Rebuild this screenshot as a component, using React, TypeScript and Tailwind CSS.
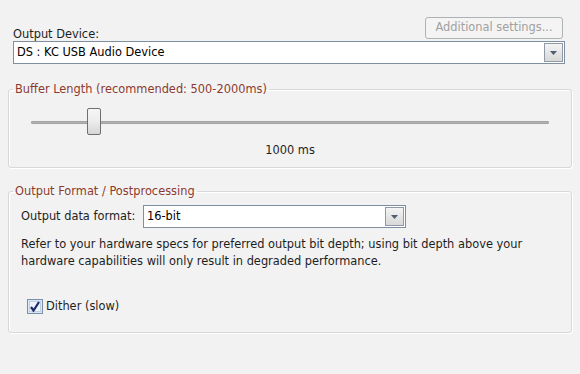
const font = "font-['DejaVu_Sans',sans-serif]";

const Combo = ({ value, className }: { value: string; className: string }) => (
  <div
    className={`flex items-stretch h-[23px] bg-white border border-[#7e8f9f] ${className}`}
  >
    <div className="flex-1 flex items-center pl-[3px] text-black">{value}</div>
    <div className="w-[19px] m-[1px] flex items-center justify-center border border-[#8f9aa6] bg-gradient-to-b from-[#f4f4f4] to-[#d8d8d8]">
      <svg width="7" height="4" viewBox="0 0 7 4">
        <path d="M0 0h7L3.5 4z" fill="#4e5e72" />
      </svg>
    </div>
  </div>
);

const Group = ({
  title,
  className,
  children,
}: {
  title: string;
  className: string;
  children: React.ReactNode;
}) => (
  <fieldset
    className={`border border-[#d5d9dc] rounded-[3px] shadow-[inset_1px_1px_0_#fff,1px_1px_0_#fff] mx-[8px] px-[12px] ${className}`}
  >
    <legend className="ml-[-8px] px-[2px] text-[#8c3a2f]">{title}</legend>
    {children}
  </fieldset>
);

export default function App() {
  return (
    <div
      className={`w-[580px] h-[374px] bg-[#f2f2f2] text-[11.4px] text-[#1e1e1e] ${font}`}
    >
      <div className="flex items-end justify-between pl-[13px] pr-[17px] pt-[17px]">
        <span className="leading-[14px] mb-[-2px]">Output Device:</span>
        <button className="w-[138px] h-[22px] rounded-[3px] border border-[#adb2b5] bg-[#f4f4f4] text-[#a0a0a0]">
          Additional settings...
        </button>
      </div>
      <Combo value="DS : KC USB Audio Device" className="mx-[13px] mt-[2px] mr-[15px]" />

      <Group title="Buffer Length (recommended: 500-2000ms)" className="mt-[17px] h-[87px]">
        <div className="relative h-[36px] mx-[10px] mt-[6px]">
          <div className="absolute left-0 right-0 top-[17px] h-[3px] rounded-[1px] bg-[#b4b4b4] border border-[#a2a2a2]" />
          <div className="absolute left-[56px] top-[4px] w-[14px] h-[27px] rounded-[2px] border border-[#6f6f6f] bg-gradient-to-b from-[#f6f6f6] via-[#ececec] to-[#d6d6d6]" />
        </div>
        <div className="text-center mt-[2px]">1000 ms</div>
      </Group>

      <Group title="Output Format / Postprocessing" className="mt-[15px] h-[150px] px-[12px]">
        <div className="flex items-center mt-[5px]">
          <span className="w-[122px]">Output data format:</span>
          <Combo value="16-bit" className="w-[263px]" />
        </div>
        <p className="mt-[8px] leading-[17px]">
          Refer to your hardware specs for preferred output bit depth; using bit depth above your
          hardware capabilities will only result in degraded performance.
        </p>
        <div className="flex items-center gap-[3px] mt-[28px] ml-[6px]">
          <svg width="16" height="15" viewBox="0 0 16 15">
            <rect x="0.5" y="0.5" width="15" height="14" fill="#dbe8f6" stroke="#7b8fa6" />
            <rect x="2.5" y="2.5" width="11" height="10" fill="#eef4fb" stroke="#c0d0e3" />
            <path d="M4 8l2.5 3.5L12 3" fill="none" stroke="#1f2a6b" strokeWidth="2.2" />
          </svg>
          <span>Dither (slow)</span>
        </div>
      </Group>
    </div>
  );
}
